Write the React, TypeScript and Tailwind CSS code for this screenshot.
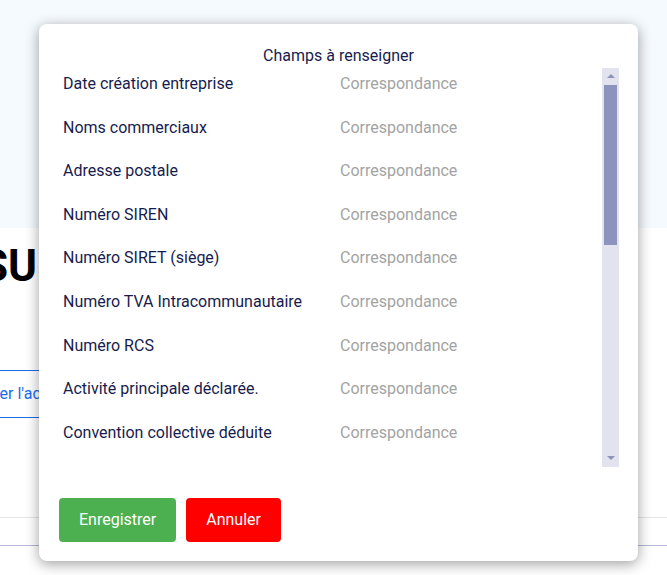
const fields = [
  "Date création entreprise",
  "Noms commerciaux",
  "Adresse postale",
  "Numéro SIREN",
  "Numéro SIRET (siège)",
  "Numéro TVA Intracommunautaire",
  "Numéro RCS",
  "Activité principale déclarée.",
  "Convention collective déduite",
  "Code NAF",
  "Forme juridique",
  "Capital social",
  "Effectif",
  "Dirigeant",
  "Téléphone",
  "Adresse email",
  "Site internet",
  "Date de clôture",
  "Régime fiscal",
  "Chiffre d'affaires",
];

function ScrollTrack() {
  return (
    <div className="flex w-[17px] shrink-0 flex-col bg-[#e3e3ef]">
      <div className="flex h-[17px] items-center justify-center">
        <svg width="8" height="4" viewBox="0 0 8 4" className="-mt-[2px]">
          <path d="M0 4 L4 0 L8 4 Z" fill="#8c93bd" />
        </svg>
      </div>
      <div className="mx-[2px] h-[160px] bg-[#8c93bd]" />
      <div className="flex-1" />
      <div className="flex h-[17px] items-center justify-center">
        <svg width="8" height="4" viewBox="0 0 8 4" className="-mt-[1px]">
          <path d="M0 0 L8 0 L4 4 Z" fill="#8c93bd" />
        </svg>
      </div>
    </div>
  );
}

function FieldsModal() {
  return (
    <div className="absolute left-[39px] top-[24px] flex h-[537px] w-[599px] flex-col rounded-lg bg-white pl-6 pr-[19px] pt-[20px] pb-[19px] shadow-[0_3px_14px_rgba(0,0,0,0.38)]">
      <h2 className="pr-[5px] text-center text-base leading-6 text-[#171c4e]">
        Champs à renseigner
      </h2>
      <div className="flex h-[399px]">
        <div className="flex-1 overflow-hidden pt-[4px]">
          {fields.map((f) => (
            <div key={f} className="mb-[19.6px] flex text-base leading-6">
              <span className="w-[277px] shrink-0 text-[#171c4e]">{f}</span>
              <span className="text-[#a3a3a3]">Correspondance</span>
            </div>
          ))}
        </div>
        <ScrollTrack />
      </div>
      <div className="mt-auto -ml-1 flex gap-[10px]">
        <button className="h-[44px] rounded bg-[#4caf50] px-5 text-base text-white">
          Enregistrer
        </button>
        <button className="h-[44px] rounded bg-[#ff0000] px-5 text-base text-white">
          Annuler
        </button>
      </div>
    </div>
  );
}

export default function App() {
  return (
    <div className="relative h-[575px] overflow-hidden bg-white font-['Roboto',sans-serif]">
      <div className="h-[228px] bg-[#f5faff]" />
      <h1 className="-ml-[19px] mt-[12px] whitespace-nowrap text-[44px] font-bold leading-[52px] text-black">
        SUIVI DU DOSSIER
      </h1>
      <div className="mt-[78px] flex">
        <button className="-ml-[76px] h-[48px] whitespace-nowrap rounded border border-[#1a6ee8] px-5 text-base text-[#1a6ee8]">
          Consulter l'accompagnement
        </button>
      </div>
      <div className="mt-[99px] border-t border-[#e4e4e4]" />
      <div className="mt-[27px] border-t border-[#b4b8da]" />
      <FieldsModal />
    </div>
  );
}
